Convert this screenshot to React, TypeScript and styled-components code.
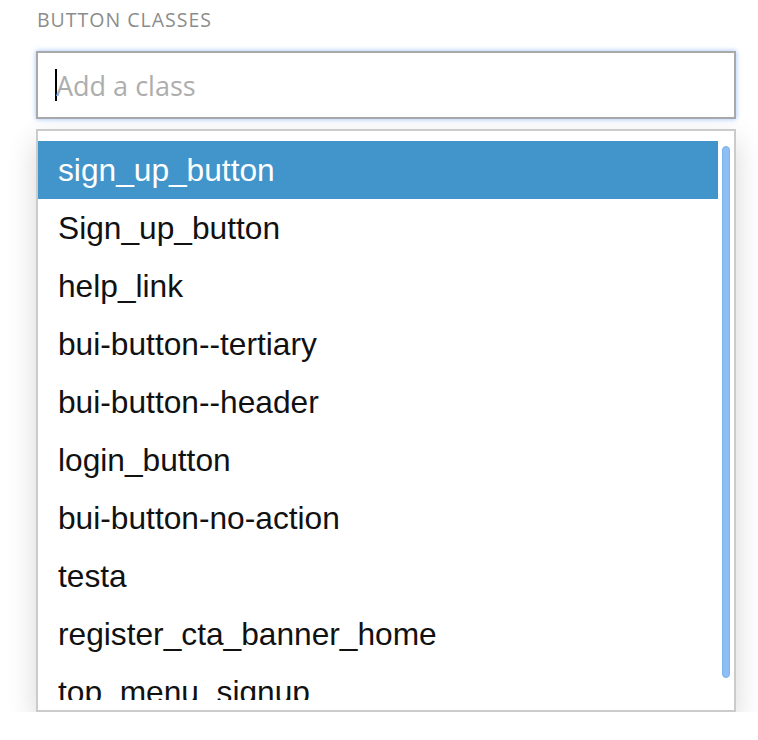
import { createGlobalStyle } from "styled-components";
import styled from "styled-components";

const GlobalStyle = createGlobalStyle`
  html, body {
    margin: 0;
    padding: 0;
    background: #fff;
  }
  * {
    box-sizing: border-box;
  }
`;

const Page = styled.div`
  padding: 8px 0 0 36px;
  width: 736px;
`;

const Label = styled.div`
  font-family: "Open Sans", sans-serif;
  font-size: 19.5px;
  line-height: 24px;
  letter-spacing: 1px;
  color: #8c8c8c;
  padding-left: 1px;
  margin-bottom: 19px;
`;

const InputBox = styled.div`
  height: 68px;
  border: 2px solid #a9a9a9;
  box-shadow: 0 0 5px rgba(90, 150, 255, 0.6);
  display: flex;
  align-items: center;
  padding-left: 17px;
  background: #fff;
`;

const Caret = styled.span`
  width: 2px;
  height: 32px;
  background: #000;
  margin-right: -1px;
`;

const Placeholder = styled.span`
  font-family: "Open Sans", sans-serif;
  font-size: 27px;
  color: #adadad;
`;

const Dropdown = styled.div`
  margin-top: 10px;
  border: 2px solid #cbcbcb;
  padding: 10px 0;
  background: #fff;
  box-shadow: 0 12px 28px rgba(0, 0, 0, 0.16);
  display: flex;
`;

const List = styled.ul`
  list-style: none;
  margin: 0;
  padding: 0;
  flex: 1;
  height: 559px;
  overflow: hidden;
`;

const Item = styled.li<{ $active?: boolean }>`
  height: 58px;
  line-height: 58px;
  padding-left: 20px;
  font-family: "Liberation Sans", Arial, sans-serif;
  font-size: 31.7px;
  white-space: nowrap;
  color: ${(p) => (p.$active ? "#fff" : "#111")};
  background: ${(p) => (p.$active ? "#4195ca" : "transparent")};
`;

const ScrollTrack = styled.div`
  width: 16px;
  padding: 5px 4px 0;
`;

const Thumb = styled.div`
  width: 8px;
  height: 532px;
  border-radius: 4px;
  background: #8dbff4;
  border: 1px solid #7eb2ea;
`;

const classes = [
  "sign_up_button",
  "Sign_up_button",
  "help_link",
  "bui-button--tertiary",
  "bui-button--header",
  "login_button",
  "bui-button-no-action",
  "testa",
  "register_cta_banner_home",
  "top_menu_signup",
];

export default function App() {
  return (
    <>
      <GlobalStyle />
      <Page>
        <Label>BUTTON CLASSES</Label>
        <InputBox>
          <Caret />
          <Placeholder>Add a class</Placeholder>
        </InputBox>
        <Dropdown>
          <List>
            {classes.map((c, i) => (
              <Item key={c} $active={i === 0}>
                {c}
              </Item>
            ))}
          </List>
          <ScrollTrack>
            <Thumb />
          </ScrollTrack>
        </Dropdown>
      </Page>
    </>
  );
}
